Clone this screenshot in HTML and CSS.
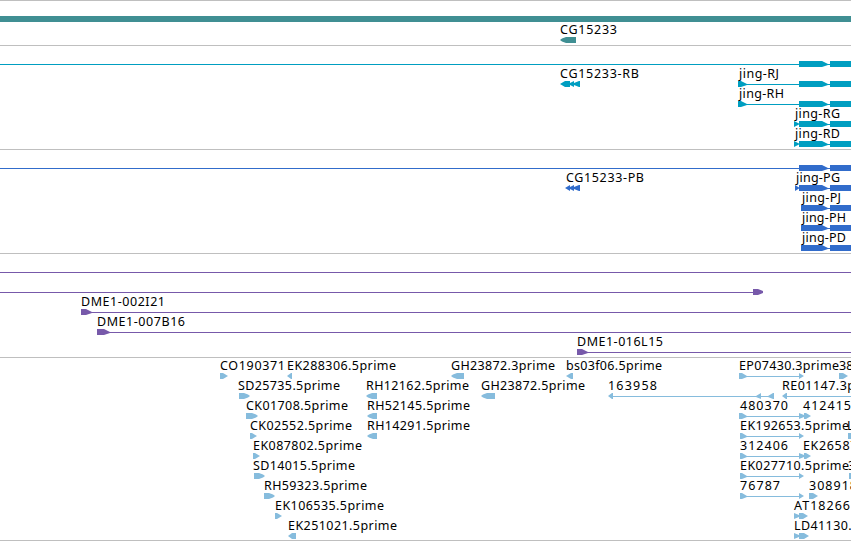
FILE: index.html
```html
<!DOCTYPE html>
<html lang="en">
<head>
    <meta charset="UTF-8">
    <title>Genome browser</title>
    <link rel="stylesheet" href="styles.css">
</head>
<body>

    <!-- every track keeps the same coordinates through its viewBox -->
    <div class="track gene">
        <svg width="851" height="44" viewBox="0 1 851 44">
            <path d="M0 16h851v6h-851z"/>
            <text x="560" y="34" textLength="57">CG15233</text>
            <path d="M560 40l2-1.500 4-1.500h10v6h-10l-4-1.500z"/>
        </svg>
    </div>

    <div class="track transcript">
        <svg width="851" height="103" viewBox="0 46 851 103">
            <path d="M0 64h799v1h-799z"/>
            <path d="M799 61h23l6 3h2v-3h21v6h-21v-2h-2l-6 2h-23z"/>

            <text x="560" y="78" textLength="79">CG15233-RB</text>
            <path d="M560 84l5-3h5v2l4-2v2l5-2h1v6h-1l-5-2v2l-4-2v2h-5z"/>

            <text x="739" y="78" textLength="40">jing-RJ</text>
            <path d="M738 81h3l6 3h52v1h-52l-6 2h-3z"/>
            <path d="M799 81h23l6 3h2v-3h21v6h-21v-2h-2l-6 2h-23z"/>

            <text x="739" y="98" textLength="45">jing-RH</text>
            <path d="M738 101h3l6 3h52v1h-52l-6 2h-3z"/>
            <path d="M799 101h23l6 3h2v-3h21v6h-21v-2h-2l-6 2h-23z"/>

            <text x="795" y="118" textLength="45">jing-RG</text>
            <path d="M794 121l5 2.500v1l-5 2.500z"/>
            <path d="M799 121h23l6 3h2v-3h21v6h-21v-2h-2l-6 2h-23z"/>

            <text x="795" y="138" textLength="45">jing-RD</text>
            <path d="M794 141l5 2.500v1l-5 2.500z"/>
            <path d="M799 141h23l6 3h2v-3h21v6h-21v-2h-2l-6 2h-23z"/>
        </svg>
    </div>

    <div class="track protein">
        <svg width="851" height="103" viewBox="0 150 851 103">
            <path d="M0 168h799v1h-799z"/>
            <path d="M799 165h23l6 3h2v-3h21v6h-21v-2h-2l-6 2h-23z"/>

            <text x="566" y="182" textLength="78">CG15233-PB</text>
            <path d="M565 188l5-3v2l4-2v2l5-2h1v6h-1l-5-2v2l-4-2v2z"/>

            <text x="796" y="182" textLength="44">jing-PG</text>
            <path d="M795 185l4 2.500v1l-4 2.500z"/>
            <path d="M799 185h23l6 3h2v-3h21v6h-21v-2h-2l-6 2h-23z"/>

            <text x="802" y="202" textLength="39">jing-PJ</text>
            <path d="M801 205h21l6 3h2v-3h21v6h-21v-2h-2l-6 2h-21z"/>

            <text x="802" y="222" textLength="44">jing-PH</text>
            <path d="M801 225h21l6 3h2v-3h21v6h-21v-2h-2l-6 2h-21z"/>

            <text x="802" y="242" textLength="44">jing-PD</text>
            <path d="M801 245h21l6 3h2v-3h21v6h-21v-2h-2l-6 2h-21z"/>
        </svg>
    </div>

    <div class="track clone">
        <svg width="851" height="103" viewBox="0 254 851 103">
            <path d="M0 272h851v1h-851z"/>
            <path d="M0 292h753v-3h5l5 2v2l-5 2h-5v-2h-753z"/>

            <text x="81" y="306" textLength="84">DME1-002I21</text>
            <path d="M81 309h5l6 3h759v1h-759l-6 2h-5z"/>

            <text x="97" y="326" textLength="88">DME1-007B16</text>
            <path d="M97 329h7l6 3h741v1h-741l-6 2h-7z"/>

            <text x="577" y="346" textLength="86">DME1-016L15</text>
            <path d="M577 349h5l6 3h263v1h-263l-6 2h-5z"/>
        </svg>
    </div>

    <div class="track est">
        <svg width="851" height="182" viewBox="0 358 851 182">
            <text x="220" y="370" textLength="65">CO190371</text>
            <path d="M220 373h3l5 3-5 3h-3z"/>
            <text x="287" y="370" textLength="109">EK288306.5prime</text>
            <path d="M287 376l4-3h1v6h-1z"/>
            <text x="451" y="370" textLength="104">GH23872.3prime</text>
            <path d="M451 376l2-1.500 4-1.500h7v6h-7l-4-1.500z"/>
            <text x="566" y="370" textLength="96">bs03f06.5prime</text>
            <path d="M566 376l5-3h2v6h-2z"/>
            <text x="739" y="370" textLength="100">EP07430.3prime</text>
            <path d="M739 373h3l5 3h52v-3l5 3-5 3v-2h-52l-5 2h-3z"/>
            <text x="839" y="370">387105</text>
            <path d="M839 373h4l5 3-5 3h-4z"/>

            <text x="238" y="390" textLength="102">SD25735.5prime</text>
            <path d="M239 373m0 20h5l4 1.500 2 1.500-2 1.500-4 1.500h-5z"/>
            <text x="366" y="390" textLength="103">RH12162.5prime</text>
            <path d="M366 396l2-1.500 4-1.500h5v6h-5l-4-1.500z"/>
            <text x="481" y="390" textLength="104">GH23872.5prime</text>
            <path d="M481 396l2-1.500 4-1.500h8v6h-8l-4-1.500z"/>
            <text x="608" y="390" textLength="49">163958</text>
            <path d="M608 396l4-3h1v3h143l5-3v3h7l5-3h1v6h-1l-5-2h-7v2l-5-2h-143v2h-1z"/>
            <text x="782" y="390" textLength="102">RE01147.3prime</text>
            <path d="M782 396l4-3h1v3h64v1h-64v2h-1z"/>

            <text x="246" y="410" textLength="102">CK01708.5prime</text>
            <path d="M246 413h6l4 1.500 2 1.500-2 1.500-4 1.500h-6z"/>
            <text x="367" y="410" textLength="103">RH52145.5prime</text>
            <path d="M367 416l2-1.500 4-1.500h4v6h-4l-4-1.500z"/>
            <text x="740" y="410" textLength="48">480370</text>
            <path d="M739 413h3l5 3h52v-3l5 2v-2h2l5 3-5 3h-2v-2l-5 2v-2h-52l-5 2h-3z"/>
            <text x="803" y="410" textLength="48">412415</text>

            <text x="250" y="430" textLength="102">CK02552.5prime</text>
            <path d="M250 433h2l5 3-5 3h-2z"/>
            <text x="367" y="430" textLength="103">RH14291.5prime</text>
            <path d="M367 436l2-1.500 4-1.500h4v6h-4l-4-1.500z"/>
            <text x="740" y="430" textLength="109">EK192653.5prime</text>
            <path d="M740 433h2l5 3h52v-3l5 3-5 3v-2h-52l-5 2h-2z"/>
            <text x="847" y="430">LD</text>
            <path d="M848 433h3v6h-3z"/>

            <text x="253" y="450" textLength="109">EK087802.5prime</text>
            <path d="M253 453h2l5 3-5 3h-2z"/>
            <text x="740" y="450" textLength="48">312406</text>
            <path d="M740 453h2l5 3h52v-3l5 2v-2h2l5 3-5 3h-2v-2l-5 2v-2h-52l-5 2h-2z"/>
            <text x="803" y="450" textLength="112">EK265876.5prime</text>

            <text x="253" y="470" textLength="102">SD14015.5prime</text>
            <path d="M254 473h5l4 1.500 2 1.500-2 1.500-4 1.500h-5z"/>
            <text x="740" y="470" textLength="109">EK027710.5prime</text>
            <path d="M740 473h2l5 3h52v-3l5 3-5 3v-2h-52l-5 2h-2z"/>
            <text x="848" y="470">3</text>
            <path d="M849 473h2v6h-2z"/>

            <text x="264" y="490" textLength="103">RH59323.5prime</text>
            <path d="M264 493h5l4 1.500 2 1.500-2 1.500-4 1.500h-5z"/>
            <text x="740" y="490" textLength="40">76787</text>
            <path d="M740 493h2l5 3h52v-3l5 3-5 3v-2h-52l-5 2h-2z"/>
            <text x="809" y="490" textLength="48">308918</text>
            <path d="M809 493h4l5 3-5 3h-4z"/>

            <text x="275" y="510" textLength="109">EK106535.5prime</text>
            <path d="M275 513h2l5 3-5 3h-2z"/>
            <text x="794" y="510" textLength="56">AT18266</text>
            <path d="M794 513l5 2v-2h4l5 3-5 3h-4v-2l-5 2z"/>

            <text x="288" y="530" textLength="109">EK251021.5prime</text>
            <path d="M288 536l4-3h4v6h-4z"/>
            <text x="794" y="530" textLength="102">LD41130.5prime</text>
            <path d="M794 533l5 2v-2h5l5 3-5 3h-5v-2l-5 2z"/>
        </svg>
    </div>

</body>
</html>
```
FILE: styles.css
```css
body {
    margin: 0;
    background-color: white;
    overflow: hidden;
}

.track {
    border-top: 1px solid #bfbfbf;
}

.track svg {
    display: block;
}

.track text {
    font-family: "Noto Sans", sans-serif;
    font-size: 12.5px;
    fill: black;
}

.gene {
    fill: #408f93;
}

.transcript {
    fill: #009ec1;
}

.protein {
    fill: #316ccb;
}

.clone {
    fill: #7759aa;
}

.est {
    fill: #86bcdd;
    border-bottom: 1px solid #bfbfbf;
}
```
